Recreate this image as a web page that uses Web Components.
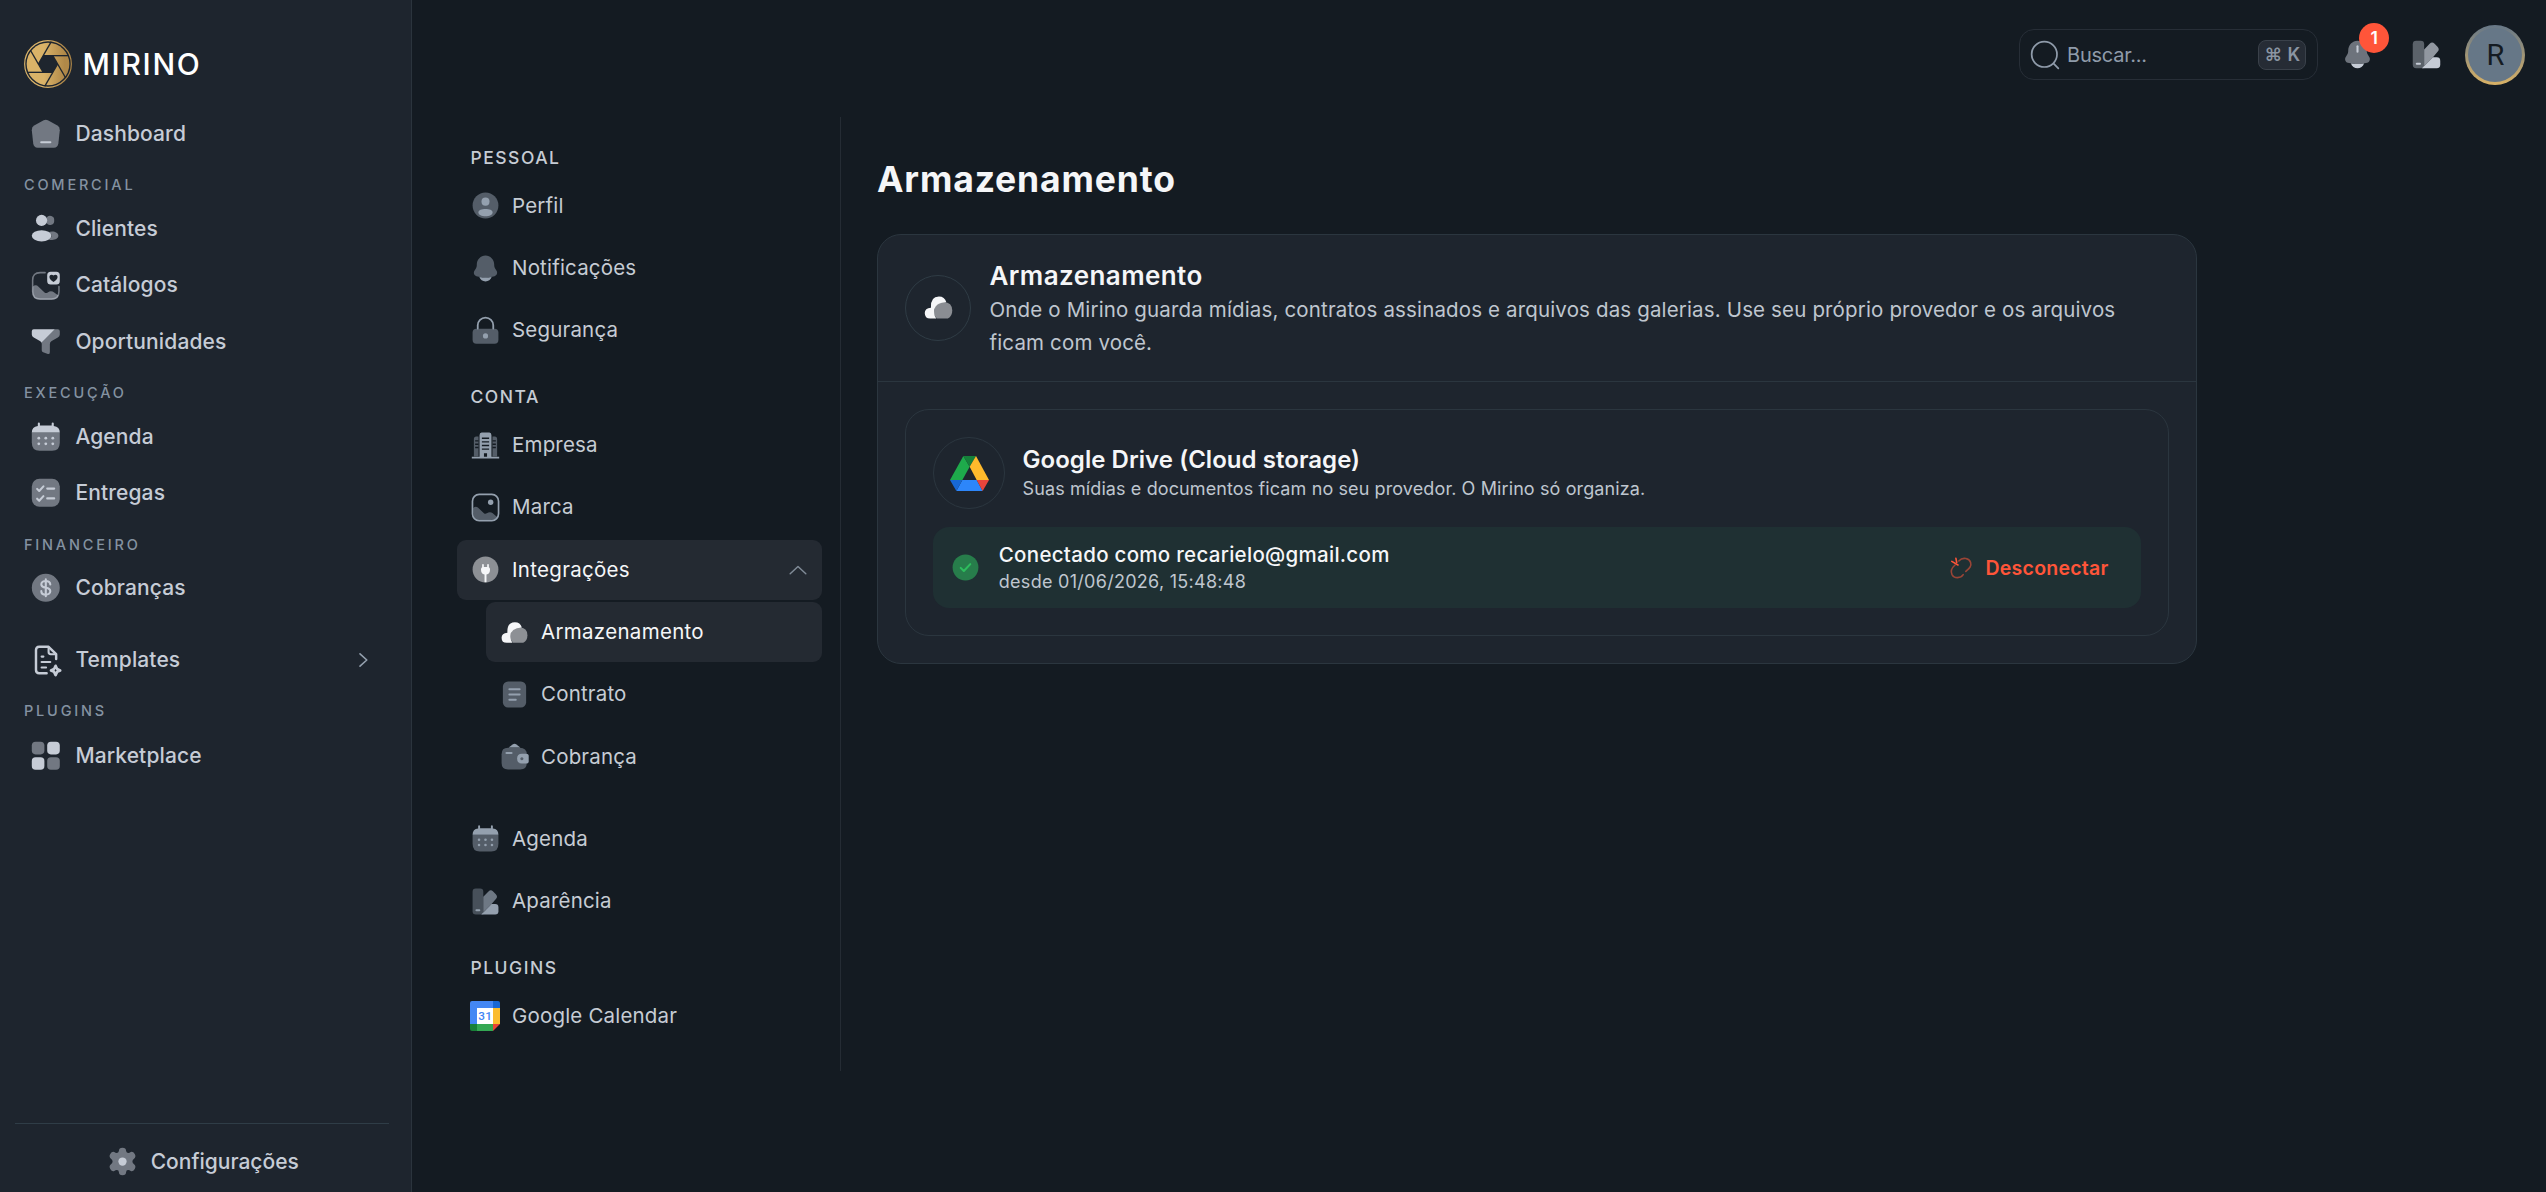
<!DOCTYPE html>
<html lang="pt-BR">
<head>
<meta charset="utf-8">
<title>Mirino · Armazenamento</title>
<style>
  html, body { margin: 0; height: 100%; }
  body { background: #141b22; color: #f5f6f8; font-family: Inter, "Liberation Sans", sans-serif; overflow: hidden; }
</style>
</head>
<body>
<mirino-app></mirino-app>
<script>
/* Duotone icon set, drawn on a 24-unit grid. `.s` marks the faded layer. */
const ICONS = {
  home: '<path class="s" d="M10.5 2.4Q12 1.7 13.5 2.4L20.3 6.1Q22.1 7.1 22 9.4L21 18.8Q20.6 22 17.8 22H6.2Q3.4 22 3 18.8L2 9.4Q1.9 7.1 3.7 6.1Z"/><rect x="8" y="17.3" width="8" height="1.5" rx=".75"/>',
  users: '<circle cx="9" cy="6" r="4"/><ellipse cx="9" cy="17" rx="7" ry="4"/><path class="s" d="M21 17c0 1.66-2.04 3-4.52 3-.9 0-1.8-.15-2.5-.4C16.9 18.1 16.9 15.900 14 14.400c.7-.25 1.600-.4 2.500-.4C18.960 14 21 15.340 21 17ZM18 6a3 3 0 0 1-5.500 1.900A4 4 0 0 0 12.500 4.100 3 3 0 0 1 18 6Z"/>',
  gallery: '<path class="s" fill="none" style="fill:none" stroke="currentColor" stroke-width="1.1" stroke-linecap="round" d="M11.5 2.6H8Q2.6 2.6 2.6 8v8q0 5.4 5.4 5.4h8q5.4 0 5.4-5.4v-3.5"/><path class="s" d="M2.6 12.6q2.2-2 4.2 0l4.3 4.1q1.1.8 2.3 0 2.4-1.7 4.6.1l3.2 2.3Q19.8 22 16 22H8Q2.4 22 2.4 16Z"/><path fill-rule="evenodd" d="M15.5 2h4A2.5 2.5 0 0 1 22 4.500v4A2.500 2.500 0 0 1 19.500 11h-4A2.500 2.500 0 0 1 13 8.500v-4A2.500 2.500 0 0 1 15.500 2Zm2 7.300c1.900-1.100 2.900-2.200 2.900-3.500 0-1.800-1.800-2.200-2.900-1.100-1.100-1.100-2.900-.7-2.900 1.100 0 1.300 1 2.400 2.900 3.500Z"/>',
  funnel: '<path d="M3.400 3H18.500L8.900 12.600Q8.600 11.900 7.800 11.400L3.400 8.900Q2 8.200 2 6.800V4.400Q2 3 3.400 3Z"/><path class="s" d="M18.500 3H20.600Q22 3 22 4.400V6.800Q22 8.200 20.600 8.900L16.200 11.400Q14.900 12.200 14.900 13.700V19.200Q14.900 21.300 13 20.600L10.100 19.500Q9.100 19.100 9.100 18V13.700Q9.100 13 8.900 12.600Z"/>',
  calendar: '<path class="s" d="M2 9H22V16Q22 22 16.500 22H7.500Q2 22 2 16Z"/><path d="M6.300 4.200V2.500a.75.75 0 0 1 1.500 0V4h8.400V2.500a.75.75 0 0 1 1.500 0v1.700Q22 4.600 22 9H2Q2 4.600 6.300 4.200Z"/><g><circle cx="7" cy="13" r="1"/><circle cx="12" cy="13" r="1"/><circle cx="17" cy="13" r="1"/><circle cx="7" cy="17" r="1"/><circle cx="12" cy="17" r="1"/><circle cx="17" cy="17" r="1"/></g>',
  checklist: '<rect class="s" x="2" y="2" width="20" height="20" rx="5.500"/><path class="l" stroke-width="1.500" d="M5.800 9.200 7.300 10.700 10.300 7.400M5.800 16.200 7.300 17.700 10.300 14.400M13 9H18M13 16H18"/>',
  dollar: '<circle class="s" cx="12" cy="12" r="10"/><path class="l" stroke-width="1.500" d="M12 6V18M15.200 9.600C15.200 8.100 13.800 7.100 12 7.100S8.800 8.100 8.800 9.500C8.800 11 10.100 11.700 12 12S15.200 13.100 15.200 14.500 13.800 16.900 12 16.900 8.800 15.900 8.800 14.400"/>',
  template: '<path class="l" stroke-width="1.750" d="M12.600 21.600H7.300Q5 21.600 5 19.300V5Q5 2.700 7.300 2.700H14L19.400 8V11.500"/><path class="l" stroke-width="1.500" d="M14 3V6.500Q14 8 15.500 8H19M9 9.700H10.300M9 13.600H15.200M9 17.500H12.200"/><path class="l" stroke-width="1.900" d="M19 16.300 20.100 18.600 22.300 19.600 20.100 20.600 19 22.900 17.900 20.600 15.700 19.600 17.900 18.600Z"/>',
  grid: '<rect class="s" x="2" y="2" width="9" height="9" rx="2.700"/><rect x="13" y="2" width="9" height="9" rx="2.700"/><rect x="2" y="13" width="9" height="9" rx="2.700"/><rect class="s" x="13" y="13" width="9" height="9" rx="2.700"/>',
  gear: '<path class="s" d="M9.400 4.200Q9.400 2 12 2T14.600 4.200Q14.700 5.700 16 5.800 17 5.900 18 5.100 19.700 4.500 20.900 6.600T20.400 10Q19.200 10.900 19.200 12T20.400 14Q22.100 15.300 20.900 17.400T18 18.900Q17 18.100 16 18.200 14.700 18.300 14.600 19.800 14.600 22 12 22T9.400 19.800Q9.300 18.300 8 18.200 7 18.100 6 18.900 4.300 19.500 3.100 17.400T3.600 14Q4.800 13.100 4.800 12T3.600 10Q1.900 8.700 3.100 6.600T6 5.100Q7 5.900 8 5.800 9.300 5.700 9.400 4.200Z"/><circle cx="12" cy="12" r="3"/>',
  chevron: '<path class="l" stroke-width="1.600" d="M9 5.800 15.800 12 9 18.200"/>',
  chevronUp: '<path class="l" stroke-width="1.250" d="M5.300 15.200 12 9 18.700 15.200"/>',
  search: '<circle cx="11.500" cy="11.500" r="9.500" style="fill:none" stroke="currentColor" stroke-width="1.300"/><path class="l" stroke-width="1.300" d="M18.500 18.500 22 22"/>',
  bell: '<path class="s" d="M18.750 9.710V9C18.750 5.140 15.730 2 12 2S5.250 5.140 5.250 9v.71c0 .84-.24 1.670-.69 2.370L3.450 13.810c-1.010 1.570-.24 3.710 1.520 4.210a25.800 25.800 0 0 0 14.060 0c1.760-.5 2.530-2.640 1.520-4.210l-1.110-1.730a4.400 4.400 0 0 1-.69-2.370Z"/><path d="M7.240 18.550C7.890 20.550 9.780 22 12 22s4.110-1.450 4.760-3.450c-3.150.59-6.370.59-9.520 0Z"/>',
  bellLine: '<path class="s" d="M18.750 9.710V9C18.750 5.140 15.730 2 12 2S5.250 5.140 5.250 9v.71c0 .84-.24 1.670-.69 2.370L3.450 13.810c-1.010 1.570-.24 3.710 1.520 4.210a25.800 25.800 0 0 0 14.060 0c1.760-.5 2.530-2.640 1.520-4.210l-1.110-1.730a4.400 4.400 0 0 1-.69-2.370Z"/><path d="M7.240 18.550C7.890 20.550 9.780 22 12 22s4.110-1.450 4.760-3.450c-3.150.59-6.370.59-9.520 0Z"/><path class="l" stroke-width="1.500" d="M12 6V10"/>',
  swatch: '<path opacity=".4" d="M4.500 2H7.800Q10.300 2 10.300 4.500V22H4.500Q2 22 2 19.500V4.500Q2 2 4.500 2Z"/><path opacity=".7" d="M10.300 8.400 14.300 4.200Q16.100 2.500 17.900 4.200L20 6.300Q21.700 8.100 20.200 9.800L16.700 14 10.300 20.400Z"/><path d="M8.700 22 16.700 14H19.500Q22 14 22 16.500V19.500Q22 22 19.500 22Z"/><rect x="4.200" y="18" width="3.800" height="1.500" rx=".75"/>',
  profile: '<circle class="s" cx="12" cy="12" r="10"/><circle cx="12" cy="9" r="3.100"/><path d="M17.500 17.400C17.500 19.100 15 20.300 12 20.300S6.500 19.100 6.500 17.400 9 14.800 12 14.800 17.500 15.700 17.500 17.400Z"/>',
  lock: '<path class="l" stroke-width="1.400" d="M6 10.500V8A6 6 0 0 1 18 8V10.500"/><rect class="s" x="2" y="10.600" width="20" height="11.600" rx="3"/><circle cx="12" cy="16.200" r="2"/>',
  building: '<path d="M1.400 20.700H22.600V22H1.400ZM9 2H15Q16.600 2 16.600 4V21H13.200V18H10.800V21H7.400V4Q7.400 2 9 2Z"/><path class="s" d="M6.600 5H4.800Q3 5 3 7V20.600H6.600ZM17.400 5H19.200Q21 5 21 7V20.600H17.400Z"/><path stroke="#141b22" stroke-width="1.100" d="M9.200 6.400H14.800M9.200 9.200H14.800M9.200 12H14.800M9.200 14.800H14.800M4 8.400H6.600M4 11H6.600M4 13.600H6.600M17.400 8.400H20M17.400 11H20M17.400 13.600H20"/>',
  picture: '<rect x="1.900" y="1.900" width="20.200" height="20.200" rx="5.200" style="fill:none" stroke="currentColor" stroke-width="1.300"/><circle cx="16" cy="8" r="2.100"/><path class="s" d="M2.500 12.400Q4.400 10.500 6.300 12.200L10.800 16.400Q11.800 17.200 13 16.500 15.600 15 17.600 16.500L21.200 19.500Q19.500 21.500 16 21.500H8Q2.500 21.500 2.500 16Z"/>',
  plug: '<circle class="s" cx="12" cy="12" r="10"/><path d="M9.400 8.300a.65.65 0 0 1 1.300 0V10h2.600V8.300a.65.65 0 0 1 1.300 0V10.300Q15.500 10.500 15.500 12 15.500 15.300 12.750 15.900V21.900H11.250V15.900Q8.500 15.300 8.500 12 8.500 10.500 9.400 10.300Z"/>',
  cloud: '<path d="M6 20Q2 20 2 16 2 12.400 6.500 12.100 6.100 4 12.300 4 16.500 4 17.700 8.200 8.900 8.600 8.900 15 8.900 18 10.400 20Z"/><path class="s" d="M10.800 20Q8.900 18 8.900 15 8.900 8 15.800 8 22 8.300 22 14.200 22 18.500 18.800 20Z"/>',
  doc: '<rect class="s" x="3" y="2" width="18" height="20" rx="4"/><path class="l" stroke-width="1.500" d="M8 8H16M8 12H16M8 16H13"/>',
  wallet: '<path class="s" d="M7 5.300H16Q21.500 5.300 21.500 10.500V17Q21.500 22 16.500 22H7Q2 22 2 17V10.300Q2 5.300 7 5.300Z"/><path d="M7.500 5 10.500 2.700Q12 1.600 13.500 2.700L16.500 5Z"/><rect x="5" y="8.500" width="5.500" height="1.500" rx=".75"/><path fill-rule="evenodd" d="M17.700 9.800H21Q23 9.800 23 11.300V16Q23 17.500 21 17.500H17.700Q14 17.300 14 13.600T17.700 9.800ZM17.700 12.500a1.200 1.200 0 1 0 .01 0Z"/>',
  unlink: '<path class="l" opacity=".55" stroke-width="1.600" d="M9.800 5C14 .4 20.400 2.600 21.600 6.500 22.800 10.500 20 12.500 16.800 15.400M6 9C1.900 12.600 1.700 15.500 2.900 18.300 5 22.700 11.700 22.700 14.200 18.700"/><path class="l" stroke-width="1.600" d="M2.800 5.400 9 9M6.900 2.300 7.700 6.300"/>',
  check: '<circle class="s" cx="12" cy="12" r="10"/><path class="l" stroke-width="1.600" d="M8.300 12.300 10.700 14.700 15.700 9.400"/>'
};

class UiIcon extends HTMLElement {
  connectedCallback() {
    const s = this.getAttribute('size') || 24;
    this.attachShadow({ mode: 'open' }).innerHTML = `
      <style>:host{display:block;flex:none;width:${s}px;height:${s}px}
      svg{display:block;width:100%;height:100%;fill:currentColor;overflow:visible}
      .s{opacity:var(--fade,.5)} .l{fill:none;stroke:currentColor;stroke-linecap:round;stroke-linejoin:round}</style>
      <svg viewBox="0 0 24 24">${ICONS[this.getAttribute('name')] || ''}</svg>`;
  }
}

class MirinoLogo extends HTMLElement {
  connectedCallback() {
    const blades = [0, 60, 120, 180, 240, 300]
      .map(a => `<path d="M57.500 47H135" transform="rotate(${a} 72 72)"/>`).join('');
    this.attachShadow({ mode: 'open' }).innerHTML = `
      <style>:host{display:flex;align-items:center;height:48px;padding-left:24px;gap:10.500px}
      svg{width:48px;height:48px;flex:none}
      span{font-size:30px;line-height:48px;font-weight:500;letter-spacing:1.700px;color:#fff}</style>
      <svg viewBox="0 0 144 144">
        <defs><linearGradient id="g" gradientUnits="userSpaceOnUse" x1="60" y1="0" x2="122" y2="0">
          <stop offset="0" stop-color="#dab368"/><stop offset="1" stop-color="#b08848"/></linearGradient></defs>
        <circle cx="72" cy="72" r="70" fill="none" stroke="url(#g)" stroke-width="3.500"/>
        <circle cx="72" cy="72" r="64" fill="url(#g)"/>
        <path d="M57.500 47H86.500L101 72 86.500 97H57.500L43 72Z" fill="#1e252e"/>
        <g stroke="#1e252e" stroke-width="4">${blades}</g>
      </svg><span>MIRINO</span>`;
  }
}

class SideItem extends HTMLElement {
  connectedCallback() {
    this.attachShadow({ mode: 'open' }).innerHTML = `
      <style>:host{display:flex;align-items:center;box-sizing:border-box;height:56.400px;padding:0 36px 0 29.200px;gap:12.600px;
        color:#c6ccd6;font-size:21px;font-weight:500;letter-spacing:.120px;white-space:nowrap}
      span{flex:1;line-height:30px} .c{color:#94a0ae}</style>
      <ui-icon name="${this.getAttribute('icon')}" size="33.600"></ui-icon>
      <span><slot></slot></span>${this.hasAttribute('more') ? '<ui-icon class="c" name="chevron" size="24"></ui-icon>' : ''}`;
  }
}

class SideLabel extends HTMLElement {
  connectedCallback() {
    this.attachShadow({ mode: 'open' }).innerHTML = `
      <style>:host{display:block;box-sizing:border-box;height:38.600px;padding:13.200px 0 0 24px;
        font-size:14.500px;line-height:20px;font-weight:500;letter-spacing:2.800px;color:#8492a1}</style><slot></slot>`;
  }
}

class SideBar extends HTMLElement {
  connectedCallback() {
    this.attachShadow({ mode: 'open' }).innerHTML = `
      <style>:host{display:flex;flex-direction:column;box-sizing:border-box;width:412px;flex:none;height:100%;
        background:#1e252e;border-right:1px solid #2b343d;padding-top:40px}
      nav{flex:1;padding-top:17.800px} .gap{margin-top:15.600px} .nudge{margin-top:.600px}
      footer{margin:0 22px 0 15px;border-top:1px solid #2f3d47;height:68px;display:flex;align-items:center;justify-content:center;
        color:#c6ccd6;font-size:21px;font-weight:500;white-space:nowrap}
      footer div{display:flex;align-items:center;gap:11.500px;padding:6px 0 0 1px}</style>
      <mirino-logo></mirino-logo>
      <nav>
        <side-item icon="home">Dashboard</side-item>
        <side-label>COMERCIAL</side-label>
        <side-item icon="users">Clientes</side-item>
        <side-item icon="gallery">Catálogos</side-item>
        <side-item icon="funnel">Oportunidades</side-item>
        <side-label>EXECUÇÃO</side-label>
        <side-item icon="calendar">Agenda</side-item>
        <side-item icon="checklist">Entregas</side-item>
        <side-label>FINANCEIRO</side-label>
        <side-item icon="dollar">Cobranças</side-item>
        <side-item class="gap" icon="template" more>Templates</side-item>
        <side-label>PLUGINS</side-label>
        <side-item class="nudge" icon="grid">Marketplace</side-item>
      </nav>
      <footer><div><ui-icon name="gear" size="33"></ui-icon><span>Configurações</span></div></footer>`;
  }
}

class TopBar extends HTMLElement {
  connectedCallback() {
    this.attachShadow({ mode: 'open' }).innerHTML = `
      <style>:host{display:flex;align-items:center;justify-content:flex-end;height:109px;padding:0 20.700px 8px 0;color:#c6ccd6}
      .search{display:flex;align-items:center;box-sizing:border-box;width:299.500px;height:51.500px;border:1px solid #272e37;border-radius:15px;
        padding:0 11px 0 9px;color:#8f9baa;font-size:20px}
      .search span{flex:1;margin-left:6.300px;letter-spacing:-.250px}
      kbd{box-sizing:border-box;width:48px;height:30px;border:1px solid #3a414a;border-radius:8px;background:#262c35;color:#8a95a2;
        font:600 18px/28px Inter,"DejaVu Sans",sans-serif;text-align:center;white-space:nowrap;word-spacing:1px}
      .bell{position:relative;margin-left:23px}
      .badge{position:absolute;left:18px;top:-15.500px;width:30px;height:30px;border-radius:50%;background:#ff5539;color:#fff;
        font-size:17.500px;line-height:30px;font-weight:600;text-align:center}
      .swatch{margin-left:36px}
      .avatar{margin-left:22px;box-sizing:border-box;width:60px;height:60px;border-radius:50%;padding:3px;
        background:linear-gradient(180deg,#667787,#d9b266)}
      .avatar div{height:54px;border-radius:50%;background:#667787;color:#141b22;text-align:center;font:400 29px/55px Roboto,sans-serif}</style>
      <div class="search"><ui-icon name="search" size="32"></ui-icon><span>Buscar...</span><kbd>⌘ K</kbd></div>
      <div class="bell"><ui-icon name="bellLine" size="33"></ui-icon><div class="badge">1</div></div>
      <ui-icon class="swatch" name="swatch" size="33"></ui-icon>
      <div class="avatar"><div>R</div></div>`;
  }
}

class NavItem extends HTMLElement {
  connectedCallback() {
    const icon = this.getAttribute('icon');
    this.attachShadow({ mode: 'open' }).innerHTML = `
      <style>:host{display:flex;align-items:center;box-sizing:border-box;height:60px;margin-bottom:2.300px;padding:0 10px 0 13px;gap:11px;
        border-radius:9px;color:#c6ccd4;font-size:20.500px;letter-spacing:.180px;white-space:nowrap}
      :host([active]){background:#242a32;color:#f5f6f8;--tint:#f5f6f8;letter-spacing:.300px}
      .i{color:var(--tint,#94a0ae)} span{flex:1;line-height:30px} .c{color:#818c98}</style>
      ${icon ? `<ui-icon class="i" name="${icon}" size="31"></ui-icon>` : '<slot name="icon"></slot>'}
      <span><slot></slot></span>${this.hasAttribute('open') ? '<ui-icon class="c" name="chevronUp" size="28"></ui-icon>' : ''}`;
  }
}

class NavLabel extends HTMLElement {
  connectedCallback() {
    this.attachShadow({ mode: 'open' }).innerHTML = `
      <style>:host{display:block;margin:25.700px 0 7.100px 13.500px;font-size:17.500px;line-height:22px;font-weight:500;letter-spacing:1.500px;color:#c6ccd4}
      :host([first]){margin-top:0}</style><slot></slot>`;
  }
}

class GcalLogo extends HTMLElement {
  connectedCallback() {
    this.attachShadow({ mode: 'open' }).innerHTML = `
      <style>:host{display:block;width:31px;height:30px} svg{display:block;width:30px;height:30px}
      text{font:500 11.800px Roboto,sans-serif;fill:#4285f4}</style>
      <svg viewBox="0 0 30 30">
        <path fill="#4487f4" d="M2 0H23V7H7V23H0V2Q0 0 2 0Z"/><path fill="#1967d2" d="M23 0H28Q30 0 30 2V7H23Z"/>
        <path fill="#fbbc2d" d="M23 7H30V23H23Z"/><path fill="#34a853" d="M7 23H23V30H7Z"/>
        <path fill="#188038" d="M0 23H7V30H2Q0 30 0 28Z"/><path fill="#ea4335" d="M23 23H30L23 30Z"/>
        <path fill="#fff" d="M7 7H23V23H7Z"/><text x="15.200" y="19.300" text-anchor="middle">31</text>
      </svg>`;
  }
}

class SettingsNav extends HTMLElement {
  connectedCallback() {
    this.attachShadow({ mode: 'open' }).innerHTML = `
      <style>:host{display:block;box-sizing:border-box;width:429px;height:954px;flex:none;padding:29.700px 18px 0 45px;border-right:1px solid #252c34}
      .sub{margin-left:29px;margin-bottom:22.100px}</style>
      <nav-label first>PESSOAL</nav-label>
      <nav-item icon="profile">Perfil</nav-item>
      <nav-item icon="bell">Notificações</nav-item>
      <nav-item icon="lock">Segurança</nav-item>
      <nav-label>CONTA</nav-label>
      <nav-item icon="building">Empresa</nav-item>
      <nav-item icon="picture">Marca</nav-item>
      <nav-item icon="plug" active open>Integrações</nav-item>
      <div class="sub">
        <nav-item icon="cloud" active>Armazenamento</nav-item>
        <nav-item icon="doc">Contrato</nav-item>
        <nav-item icon="wallet">Cobrança</nav-item>
      </div>
      <nav-item icon="calendar">Agenda</nav-item>
      <nav-item icon="swatch">Aparência</nav-item>
      <nav-label>PLUGINS</nav-label>
      <nav-item><gcal-logo slot="icon"></gcal-logo>Google Calendar</nav-item>`;
  }
}

class DriveLogo extends HTMLElement {
  connectedCallback() {
    this.attachShadow({ mode: 'open' }).innerHTML = `
      <style>:host{display:block;padding-top:1px} svg{display:block;width:39px;height:35px}</style>
      <svg viewBox="150 78 117 105">
        <path fill="#1eaa4b" d="M190 78 209 110 187 150H150Z"/><path fill="#15803a" d="M190 78H228L209 110Z"/>
        <path fill="#ffba2c" d="M228 78 267 150H230L209 110Z"/><path fill="#2d86fa" d="M187 150H230L248 183H169Z"/>
        <path fill="#1768d5" d="M150 150H187L169 183Z"/><path fill="#e8453c" d="M230 150H267L248 183Z"/>
      </svg>`;
  }
}

class StorageProvider extends HTMLElement {
  connectedCallback() {
    this.attachShadow({ mode: 'open' }).innerHTML = `
      <style>:host{display:flex;flex-direction:column;gap:18px;box-sizing:border-box;height:227px;border:1px solid #2b363f;border-radius:24px;padding:27px}
      .head{display:flex;align-items:center;gap:17.500px;height:72px}
      .ring{box-sizing:border-box;width:72px;height:72px;border:1px solid #2b363f;border-radius:50%;display:flex;align-items:center;justify-content:center;flex:none}
      .head div.t{padding-top:2.500px;line-height:29px;white-space:nowrap}
      h3{margin:0;font-size:24px;line-height:29px;font-weight:600;letter-spacing:.050px;color:#f5f6f8}
      p{margin:0;font-size:18px;letter-spacing:.110px;color:#bfc6cf}
      .ok{display:flex;align-items:center;box-sizing:border-box;height:81px;border-radius:16px;background:#1f3033;padding:0 32.500px 0 17.300px}
      .ok .check{color:#2ebd5e;--fade:.55;margin-right:17.500px}
      .ok div{flex:1;line-height:27px;padding-top:1px}
      b{display:block;font-size:20.500px;font-weight:500;letter-spacing:.290px;color:#f5f6f8}
      .ok p{letter-spacing:.280px}
      button{all:unset;display:flex;align-items:center;gap:12.500px;padding-top:2px;color:#ff5539;font-size:19.500px;font-weight:600;letter-spacing:.250px}</style>
      <div class="head"><div class="ring"><drive-logo></drive-logo></div>
        <div class="t"><h3>Google Drive (Cloud storage)</h3><p>Suas mídias e documentos ficam no seu provedor. O Mirino só organiza.</p></div></div>
      <div class="ok"><ui-icon class="check" name="check" size="31"></ui-icon>
        <div><b>Conectado como recarielo@gmail.com</b><p>desde 01/06/2026, 15:48:48</p></div>
        <button><ui-icon name="unlink" size="24"></ui-icon>Desconectar</button></div>`;
  }
}

class SettingsCard extends HTMLElement {
  connectedCallback() {
    this.attachShadow({ mode: 'open' }).innerHTML = `
      <style>:host{display:block;box-sizing:border-box;width:1320px;background:#1e252e;border:1px solid #2b363f;border-radius:24px}
      header{display:flex;align-items:center;gap:18.500px;height:146px;padding:0 27px;border-bottom:1px solid #2b363f}
      .ring{box-sizing:border-box;width:66px;height:66px;border:1px solid #2f3c45;border-radius:50%;display:flex;align-items:center;justify-content:center;flex:none;color:#f5f6f8}
      .t{padding-top:2.500px} h2{margin:0;font-size:26px;line-height:34px;font-weight:600;letter-spacing:.420px;color:#f5f6f8}
      p{margin:0;font-size:20.500px;line-height:33.300px;letter-spacing:.150px;color:#bfc6cf}
      .body{padding:27px}</style>
      <header><div class="ring"><ui-icon name="cloud" size="33"></ui-icon></div>
        <div class="t"><h2><slot name="title"></slot></h2><p><slot name="text"></slot></p></div></header>
      <div class="body"><slot></slot></div>`;
  }
}

class MirinoApp extends HTMLElement {
  connectedCallback() {
    this.attachShadow({ mode: 'open' }).innerHTML = `
      <style>:host{display:flex;height:100vh;min-height:1192px;background:#141b22}
      .page{flex:1;min-width:0} .row{display:flex;align-items:flex-start}
      main{padding:42.300px 0 0 36px}
      h1{margin:0 0 32.700px;font-size:35.500px;line-height:42px;font-weight:650;letter-spacing:.850px;color:#f5f6f8}</style>
      <side-bar></side-bar>
      <div class="page">
        <top-bar></top-bar>
        <div class="row"><settings-nav></settings-nav>
          <main><h1>Armazenamento</h1>
            <settings-card><span slot="title">Armazenamento</span>
              <span slot="text">Onde o Mirino guarda mídias, contratos assinados e arquivos das galerias. Use seu próprio provedor e os arquivos<br>ficam com você.</span>
              <storage-provider></storage-provider></settings-card>
          </main></div>
      </div>`;
  }
}

for (const [tag, cls] of [['ui-icon', UiIcon], ['mirino-logo', MirinoLogo], ['side-item', SideItem], ['side-label', SideLabel],
  ['side-bar', SideBar], ['top-bar', TopBar], ['nav-item', NavItem], ['nav-label', NavLabel], ['gcal-logo', GcalLogo],
  ['settings-nav', SettingsNav], ['drive-logo', DriveLogo], ['storage-provider', StorageProvider],
  ['settings-card', SettingsCard], ['mirino-app', MirinoApp]]) customElements.define(tag, cls);
</script>
</body>
</html>
